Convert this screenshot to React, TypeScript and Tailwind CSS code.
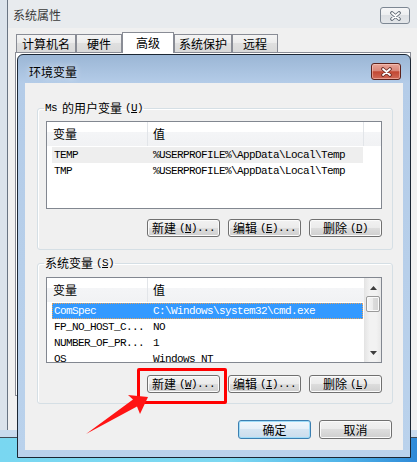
import React from "react";

const MONO = "font-['Liberation_Mono',monospace] text-[11px] tracking-[-0.6px]";

function XGlyph({ outline }: { outline: string }) {
  return (
    <svg width="13" height="10" viewBox="0 0 13 10">
      <path d="M3 2 L10 8 M10 2 L3 8" stroke={outline} strokeWidth="3.6" strokeLinecap="round" fill="none" />
      <path d="M3 2 L10 8 M10 2 L3 8" stroke="#ffffff" strokeWidth="1.8" strokeLinecap="round" fill="none" />
    </svg>
  );
}

function Btn({
  cjk,
  ascii,
  under,
  after,
  h = "h-[18px]",
  def = false,
}: {
  cjk: string;
  ascii?: string;
  under: string;
  after: string;
  h?: string;
  def?: boolean;
}) {
  return (
    <div
      className={
        def
          ? "flex h-[19px] w-[73px] items-center justify-center rounded-[3px] border border-[#3c7fb1] bg-[linear-gradient(#f1f7fc_0%,#e6f0f8_49%,#d6e5f2_50%,#cbdcec_100%)] shadow-[inset_0_0_0_1px_#9fdcf8]"
          : h === "h-[19px]"
          ? "flex h-[19px] w-[73px] items-center justify-center rounded-[3px] border border-[#707070] bg-[linear-gradient(#f2f2f2_0%,#ebebeb_49%,#dddddd_50%,#cfcfcf_100%)] shadow-[inset_0_0_0_1px_#fbfbfb]"
          : "flex h-[18px] w-[73px] items-center justify-center rounded-[3px] border border-[#707070] bg-[linear-gradient(#f2f2f2_0%,#ebebeb_49%,#dddddd_50%,#cfcfcf_100%)] shadow-[inset_0_0_0_1px_#fbfbfb]"
      }
    >
      <span className="leading-[14px]">{cjk}</span>
      {ascii !== undefined && (
        <span className={`${MONO} ml-[3px] leading-[14px]`}>
          (<span className="underline">{under}</span>){after}
        </span>
      )}
    </div>
  );
}

function Header({ withEnd }: { withEnd: boolean }) {
  return (
    <div className="flex h-[24px] shrink-0 bg-[linear-gradient(#ffffff_0%,#ffffff_42%,#f4f5f7_43%,#f1f2f4_100%)]">
      <div className="flex w-[101px] items-center border-r border-[#e2e5e9] pl-[6px]">
        <span className="leading-[14px]">变量</span>
      </div>
      <div
        className={
          withEnd
            ? "flex w-[216px] items-center border-r border-[#e2e5e9] pl-[5px]"
            : "flex w-[216px] items-center pl-[5px]"
        }
      >
        <span className="leading-[14px]">值</span>
      </div>
      <div className="flex-1" />
    </div>
  );
}

type Row = { k: string; v: string; state?: "gray" | "sel" };

function Rows({ rows }: { rows: Row[] }) {
  return (
    <div className="flex flex-col pl-[5px] pt-[1px]">
      {rows.map((r, i) => (
        <div
          key={i}
          className={
            r.state === "sel"
              ? "flex h-[16px] w-[311px] items-center border border-dotted border-[#e9a35c] bg-[#3399ff] text-white"
              : r.state === "gray"
              ? "flex h-[16px] w-[311px] items-center border border-transparent bg-[#eeeeee]"
              : "flex h-[16px] w-[311px] items-center border border-transparent"
          }
        >
          <span className={`${MONO} w-[100px] pl-[1px] leading-[14px] whitespace-pre`}>{r.k}</span>
          <span className={`${MONO} leading-[14px] whitespace-pre`}>{r.v}</span>
        </div>
      ))}
    </div>
  );
}

function ScrollBar() {
  return (
    <div className="flex w-[17px] shrink-0 flex-col border-l border-[#e4e4e4] bg-[linear-gradient(90deg,#e6e6e6,#f2f2f2_30%,#f2f2f2_70%,#e8e8e8)]">
      <div className="flex h-[17px] items-center justify-center pt-[3px]">
        <svg width="7" height="4" viewBox="0 0 7 4">
          <polygon points="3.5,0 7,4 0,4" fill="#3d3d3d" />
        </svg>
      </div>
      <div className="mx-[1px] mt-[1px] h-[16px] rounded-[2px] border border-[#9a9a9a] bg-[linear-gradient(90deg,#f6f6f6_0%,#ececec_50%,#dcdcdc_51%,#d4d4d4_100%)] shadow-[inset_0_0_0_1px_#fafafa]" />
      <div className="flex-1" />
      <div className="flex h-[17px] items-center justify-center pb-[1px]">
        <svg width="7" height="4" viewBox="0 0 7 4">
          <polygon points="0,0 7,0 3.5,4" fill="#3d3d3d" />
        </svg>
      </div>
    </div>
  );
}

const tabs = [
  { t: "计算机名", w: "w-[60px]" },
  { t: "硬件", w: "w-[46px]" },
  { t: "高级", w: "w-[52px]", sel: true },
  { t: "系统保护", w: "w-[58px]" },
  { t: "远程", w: "w-[46px]" },
];

export default function App() {
  const userRows: Row[] = [
    { k: "TEMP", v: "%USERPROFILE%\\AppData\\Local\\Temp", state: "gray" },
    { k: "TMP", v: "%USERPROFILE%\\AppData\\Local\\Temp" },
  ];
  const sysRows: Row[] = [
    { k: "ComSpec", v: "C:\\Windows\\system32\\cmd.exe", state: "sel" },
    { k: "FP_NO_HOST_C...", v: "NO" },
    { k: "NUMBER_OF_PR...", v: "1" },
    { k: "OS", v: "Windows_NT" },
  ];

  return (
    <div className="relative h-[462px] w-[417px] overflow-hidden bg-[linear-gradient(90deg,#79d7f1_0%,#7dd8f1_55%,#4fb3e8_82%,#2f8ad8_100%)] font-['Noto_Sans_CJK_SC',sans-serif] text-[12px] text-black">
      {/* Background window: 系统属性 */}
      <div className="flex h-[438px] w-[417px] flex-col border-b border-[#3f4a56] bg-[#dbe3eb]">
        <div className="flex flex-1">
          <div className="w-[7px]" />
          <div className="flex flex-1 flex-col border-l border-[#6a7583] bg-[#e8ebee]">
            <div className="flex h-[28px] shrink-0 items-start justify-between">
              <span className="ml-[5px] mt-[7px] leading-[16px] text-[#3a3a3a]">系统属性</span>
              <div className="mr-[7px] mt-[7px] flex h-[17px] w-[30px] items-center justify-center rounded-[3px] border border-[#7d8793] bg-[linear-gradient(#f6f6f7_0%,#eceef0_49%,#dcdfe3_50%,#e3e6e9_100%)]">
                <XGlyph outline="#59636f" />
              </div>
            </div>
            <div className="flex flex-1 flex-col bg-[#f0f0f0]">
              <div className="mt-[4px] flex h-[20px] items-end pl-[8px]">
                {tabs.map((tb) =>
                  tb.sel ? (
                    <div
                      key={tb.t}
                      className={`${tb.w} relative z-10 -mb-[1px] flex h-[21px] items-center justify-center border border-b-0 border-[#898c95] bg-white`}
                    >
                      <span className="leading-[14px]">{tb.t}</span>
                    </div>
                  ) : (
                    <div
                      key={tb.t}
                      className={`${tb.w} flex h-[18px] items-center justify-center border border-b-0 border-[#898c95] bg-[linear-gradient(#f4f4f4_0%,#ebebeb_49%,#dfdfdf_50%,#d9d9d9_100%)]`}
                    >
                      <span className="leading-[14px]">{tb.t}</span>
                    </div>
                  )
                )}
              </div>
              <div className="ml-[7px] mr-[6px] h-[344px] border border-[#898c95] bg-white" />
            </div>
          </div>
        </div>
        <div className="h-[7px] bg-[#c9dbee]" />
      </div>

      {/* Foreground dialog: 环境变量 */}
      <div className="absolute left-[17px] top-[54px] flex h-[404px] w-[394px] flex-col rounded-t-[6px] border border-[#1b2633] bg-[linear-gradient(#9bb6d5_0px,#b4cce8_28px,#bad2ec_100%)] px-[7px] pb-[7px]">
        <div className="flex h-[28px] shrink-0 items-start justify-between">
          <span className="ml-[4px] mt-[9px] leading-[16px] [text-shadow:0_0_6px_rgba(255,255,255,0.9)]">环境变量</span>
          <div className="mr-[2px] mt-[8px] flex h-[17px] w-[30px] items-center justify-center rounded-[3px] border border-[#5d221b] bg-[linear-gradient(#e8a597_0%,#d9877a_45%,#c24732_52%,#d06a58_100%)] shadow-[inset_0_0_0_1px_rgba(255,210,200,0.5)]">
            <XGlyph outline="#6b2a22" />
          </div>
        </div>

        <div className="flex flex-1 flex-col bg-[#f0f0f0]">
          {/* User variables */}
          <fieldset className="ml-[12px] mt-[17px] w-[356px] rounded-[3px] border border-[#d5dfe5] shadow-[inset_1px_1px_0_#ffffff]">
            <legend className="ml-[6px] flex h-[16px] items-center px-[1px]">
              <span className={`${MONO} leading-[14px]`}>Ms</span>
              <span className="ml-[5px] leading-[14px]">的用户变量</span>
              <span className={`${MONO} ml-[3px] leading-[14px]`}>
                (<span className="underline">U</span>)
              </span>
            </legend>
            <div className="ml-[8px] mt-[5px] flex h-[88px] w-[336px] flex-col overflow-hidden border border-[#828790] bg-white">
              <Header withEnd={true} />
              <Rows rows={userRows} />
            </div>
            <div className="mb-[12px] mt-[10px] flex justify-end gap-[8px] pr-[10px]">
              <Btn cjk="新建" ascii="" under="N" after="..." />
              <Btn cjk="编辑" ascii="" under="E" after="..." />
              <Btn cjk="删除" ascii="" under="D" after="" />
            </div>
          </fieldset>

          {/* System variables */}
          <fieldset className="ml-[12px] mt-[5px] w-[356px] rounded-[3px] border border-[#d5dfe5] shadow-[inset_1px_1px_0_#ffffff]">
            <legend className="ml-[6px] flex h-[16px] items-center px-[1px]">
              <span className="leading-[14px]">系统变量</span>
              <span className={`${MONO} ml-[3px] leading-[14px]`}>
                (<span className="underline">S</span>)
              </span>
            </legend>
            <div className="ml-[8px] mt-[6px] flex h-[86px] w-[336px] overflow-hidden border border-[#828790] bg-white">
              <div className="flex flex-1 flex-col overflow-hidden">
                <Header withEnd={false} />
                <Rows rows={sysRows} />
              </div>
              <ScrollBar />
            </div>
            <div className="mb-[10px] mt-[12px] flex justify-end gap-[8px] pr-[10px]">
              <Btn cjk="新建" ascii="" under="W" after="..." />
              <Btn cjk="编辑" ascii="" under="I" after="..." />
              <Btn cjk="删除" ascii="" under="L" after="" />
            </div>
          </fieldset>

          <div className="mt-[16px] flex justify-end gap-[8px] pr-[11px]">
            <Btn cjk="确定" under="" after="" def />
            <Btn cjk="取消" under="" after="" h="h-[19px]" />
          </div>
        </div>
      </div>

      {/* Red annotation: highlight box */}
      <div className="absolute left-[137px] top-[368px] h-[36px] w-[90px] rounded-[2px] border-[3px] border-[#ff0000]" />
      {/* Red annotation: arrow */}
      <svg className="pointer-events-none absolute left-0 top-0" width="417" height="462" viewBox="0 0 417 462">
        <polygon points="86,434 133,399.5 128,395 148,397 140,414 137,406.5" fill="#ff1414" />
      </svg>
    </div>
  );
}
